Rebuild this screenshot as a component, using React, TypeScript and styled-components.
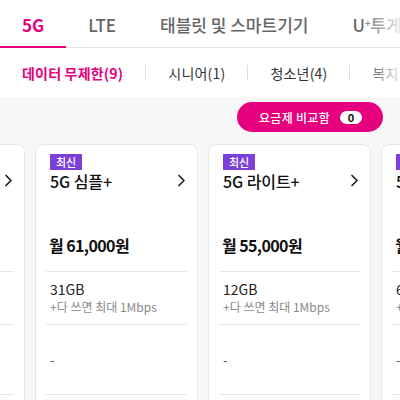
import React from "react";
import styled, { createGlobalStyle } from "styled-components";

const GlobalStyle = createGlobalStyle`
  html, body {
    margin: 0;
    padding: 0;
    background: #ffffff;
    overflow: hidden;
  }
  body {
    font-family: "Noto Sans CJK KR", "Noto Sans", sans-serif;
    color: #111;
  }
  * { box-sizing: border-box; }
`;

const PINK = "#e6007e";

const Page = styled.div`
  width: 400px;
  height: 400px;
  overflow: hidden;
  display: flex;
  flex-direction: column;
  background: #f7f7f8;
`;

const TabBar = styled.nav`
  position: relative;
  display: flex;
  flex-wrap: nowrap;
  height: 48px;
  background: #fff;
  box-shadow: inset 0 -1px 0 #e4e4e4;
  overflow: hidden;
  flex-shrink: 0;
`;

const Tab = styled.div<{ $active?: boolean }>`
  flex-shrink: 0;
  height: 48px;
  padding: 2px 22px 0;
  display: flex;
  align-items: center;
  white-space: nowrap;
  font-size: 17px;
  letter-spacing: 0;
  font-weight: ${(p) => (p.$active ? 700 : 500)};
  color: ${(p) => (p.$active ? PINK : "#666")};
  border-bottom: 2px solid ${(p) => (p.$active ? PINK : "transparent")};
  sup {
    font-size: 10px;
    line-height: 0;
    position: relative;
    top: -1px;
  }
`;

const Fade = styled.div`
  position: absolute;
  top: 0;
  right: 0;
  bottom: 1px;
  width: 40px;
  background: linear-gradient(to right, rgba(255, 255, 255, 0), rgba(255, 255, 255, 0.85));
  pointer-events: none;
`;

const SubTabBar = styled.div`
  position: relative;
  display: flex;
  align-items: center;
  gap: 22px;
  height: 49px;
  padding-left: 22px;
  background: #fff;
  overflow: hidden;
  flex-shrink: 0;
`;

const SubTab = styled.div<{ $active?: boolean }>`
  flex-shrink: 0;
  white-space: nowrap;
  font-size: 14px;
  letter-spacing: 0.2px;
  font-weight: ${(p) => (p.$active ? 700 : 400)};
  color: ${(p) => (p.$active ? PINK : "#333")};
`;

const SubDivider = styled.span`
  flex-shrink: 0;
  width: 1px;
  height: 15px;
  background: #dedede;
`;

const Content = styled.main`
  flex: 1;
  display: flex;
  flex-direction: column;
  padding-top: 5px;
`;

const CompareRow = styled.div`
  display: flex;
  justify-content: flex-end;
  padding-right: 17px;
`;

const CompareButton = styled.button`
  height: 30px;
  border: none;
  border-radius: 15px;
  background: ${PINK};
  color: #fff;
  display: flex;
  align-items: center;
  gap: 10px;
  padding: 0 21px 0 22px;
  font-family: inherit;
  font-size: 12px;
  font-weight: 500;
  letter-spacing: 0.3px;
`;

const CountPill = styled.span`
  min-width: 22px;
  height: 13px;
  border-radius: 7px;
  background: #fff;
  color: #111;
  font-size: 11px;
  font-weight: 700;
  display: flex;
  align-items: center;
  justify-content: center;
  letter-spacing: 0;
`;

const CardTrack = styled.div`
  display: flex;
  gap: 10px;
  margin-top: 12px;
  margin-left: -138px;
`;

const Card = styled.article`
  flex-shrink: 0;
  width: 163px;
  height: 290px;
  background: #fff;
  border: 1px solid #e8e8e8;
  border-radius: 8px;
  padding: 9px 10px 0;
  display: flex;
  flex-direction: column;
`;

const Badge = styled.span<{ $hidden?: boolean }>`
  align-self: flex-start;
  margin-left: 4px;
  height: 16px;
  padding: 0 6px;
  background: #7d3fd9;
  color: #fff;
  font-size: 11px;
  font-weight: 500;
  line-height: 16px;
  visibility: ${(p) => (p.$hidden ? "hidden" : "visible")};
`;

const TitleRow = styled.div`
  display: flex;
  align-items: center;
  justify-content: space-between;
  height: 21px;
  padding: 0 1px 0 4px;
`;

const Title = styled.h3`
  margin: 0;
  font-size: 16px;
  font-weight: 500;
  color: #111;
  white-space: nowrap;
  letter-spacing: -0.1px;
`;

const Price = styled.div`
  margin-top: 42px;
  padding: 0 0 14px 3px;
  height: 24px;
  box-sizing: content-box;
  font-size: 16px;
  line-height: 24px;
  font-weight: 700;
  letter-spacing: -0.6px;
  color: #111;
  white-space: nowrap;
`;

const Section = styled.div<{ $h: number }>`
  height: ${(p) => p.$h}px;
  border-top: 1px solid #e6e6e6;
  padding-left: 4px;
  display: flex;
  flex-direction: column;
  justify-content: center;
`;

const DataMain = styled.div`
  font-size: 14px;
  line-height: 18px;
  color: #222;
`;

const DataSub = styled.div`
  font-size: 12px;
  line-height: 18px;
  color: #8a8a8a;
  white-space: nowrap;
`;

const Dash = styled.div`
  font-size: 13px;
  color: #555;
`;

const Chevron = () => (
  <svg width="9" height="13" viewBox="0 0 9 13" fill="none">
    <polyline points="2,1.5 7,6.5 2,11.5" stroke="#222" strokeWidth="1.7" strokeLinecap="round" strokeLinejoin="round" />
  </svg>
);

type Plan = { name: string; price: string; data: string; isNew: boolean };

const plans: Plan[] = [
  { name: "5G 스탠다드", price: "월 75,000원", data: "150GB", isNew: true },
  { name: "5G 심플+", price: "월 61,000원", data: "31GB", isNew: true },
  { name: "5G 라이트+", price: "월 55,000원", data: "12GB", isNew: true },
  { name: "5G 슬림+", price: "월 47,000원", data: "6GB", isNew: true },
];

export default function App() {
  return (
    <>
      <GlobalStyle />
      <Page>
        <TabBar>
          <Tab $active>5G</Tab>
          <Tab>LTE</Tab>
          <Tab>태블릿 및 스마트기기</Tab>
          <Tab>
            U<sup>+</sup>투게더 결합
          </Tab>
          <Fade />
        </TabBar>
        <SubTabBar>
          <SubTab $active>데이터 무제한(9)</SubTab>
          <SubDivider />
          <SubTab>시니어(1)</SubTab>
          <SubDivider />
          <SubTab>청소년(4)</SubTab>
          <SubDivider />
          <SubTab>복지(2)</SubTab>
          <Fade />
        </SubTabBar>
        <Content>
          <CompareRow>
            <CompareButton>
              요금제 비교함
              <CountPill>0</CountPill>
            </CompareButton>
          </CompareRow>
          <CardTrack>
            {plans.map((p) => (
              <Card key={p.name}>
                <Badge $hidden={!p.isNew}>최신</Badge>
                <TitleRow>
                  <Title>{p.name}</Title>
                  <Chevron />
                </TitleRow>
                <Price>{p.price}</Price>
                <Section $h={55}>
                  <DataMain>{p.data}</DataMain>
                  <DataSub>+다 쓰면 최대 1Mbps</DataSub>
                </Section>
                <Section $h={72}>
                  <Dash>-</Dash>
                </Section>
                <Section $h={40} />
              </Card>
            ))}
          </CardTrack>
        </Content>
      </Page>
    </>
  );
}
